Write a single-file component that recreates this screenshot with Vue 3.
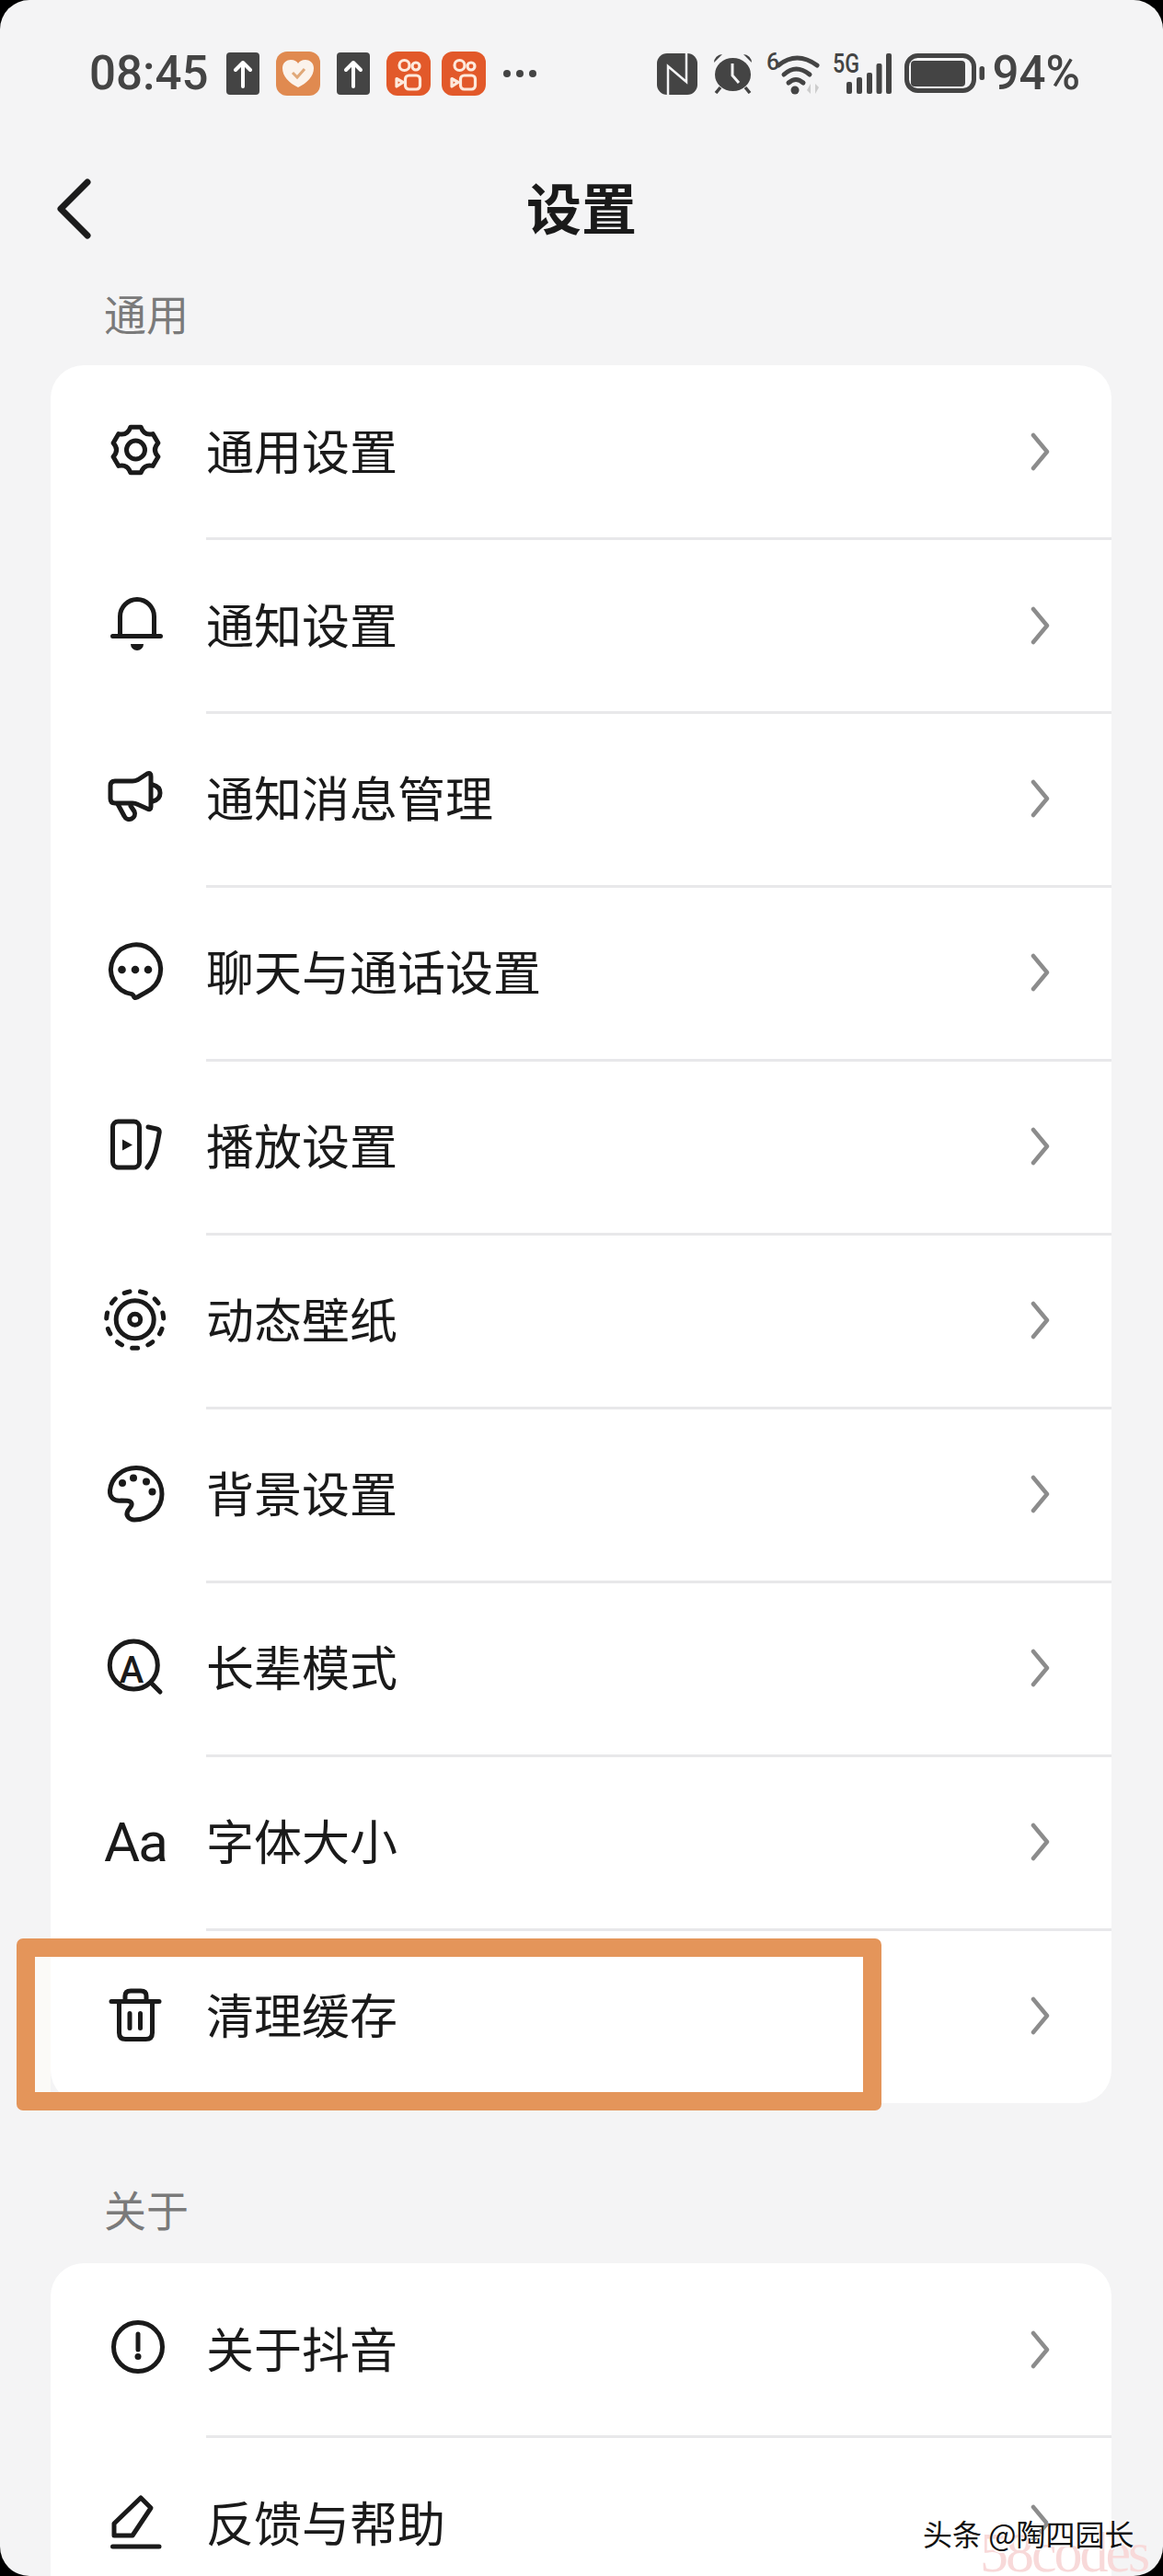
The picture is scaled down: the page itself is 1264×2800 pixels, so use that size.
<script setup>
// gear outline: six flat teeth joined by soft valleys
const gearPath = () => {
  const cx = 47.5
  const cy = 48
  const pt = (r, deg) => {
    const a = (deg * Math.PI) / 180
    return (cx + r * Math.cos(a)).toFixed(1) + " " + (cy + r * Math.sin(a)).toFixed(1)
  }
  let d = ""
  for (let k = 0; k < 6; k++) {
    const a = k * 60 - 90
    d += (k === 0 ? "M" : "L") + pt(25.5, a - 13) + " L" + pt(25.5, a + 13) + " Q" + pt(17.5, a + 30) + " " + pt(25.5, a + 47)
  }
  return d + "Z"
}

const icons = {
  gear: `<path d="${gearPath()}"/><circle cx="47.5" cy="48" r="10"/>`,
  bell: `<path d="M30.5 61V40a18.5 18.5 0 0 1 37 0V61M22.5 61.5H74.5"/><path class="solid" d="M42 70h14a7 7 0 0 1-14 0z"/>`,
  horn: `<path d="M25 30H44Q47 30 50 28.5L60 22Q64 20 64 25V58Q64 62 60 60L50 55.5Q47 54 44 54H25Q20 54 20 49V35Q20 30 25 30Z"/><path d="M66 34Q74 36 74 43Q74 50 66 52M28 55L35 68A6 6 0 0 0 46 63L42 57"/>`,
  chat: `<path d="M43.5 72.6A27 27 0 1 1 58.5 70.6L49 76Q45.5 77.5 45.3 74.5Z"/><circle class="solid" cx="32.5" cy="46" r="4.3"/><circle class="solid" cx="47" cy="46" r="4.3"/><circle class="solid" cx="61" cy="46" r="4.3"/>`,
  play: `<rect x="22.5" y="22" width="29" height="50" rx="6"/><path class="solid" d="M33 41.5L44 47.5L33 53.5Z"/><path d="M61 28L70 30Q74 31 73 35C71 45 69 62 60 72"/>`,
  wallpaper: `<circle cx="46.7" cy="48.3" r="31" pathLength="110" stroke-dasharray="3.4 6.6" stroke-linecap="round" transform="rotate(84.5 46.7 48.3)"/><circle cx="46.7" cy="48.3" r="20.5"/><circle cx="46.7" cy="48.3" r="6"/>`,
  palette: `<path d="M48 20.5C65 20.5 76 34 76 49C76 66 62 77 46 77C40 77 36 72 39 67C41 64 44 62 43 59C42 56 38 56 32 56C23 57 19 52 19.5 45C21 31 33 20.5 48 20.5Z"/><circle class="solid" cx="33" cy="37" r="4"/><circle class="solid" cx="45" cy="31.5" r="4"/><circle class="solid" cx="59" cy="35.5" r="4"/><circle class="solid" cx="65.5" cy="46.5" r="4"/>`,
  elder: `<circle cx="45.3" cy="46" r="26"/><path d="M65 66L74 75"/><text class="solid" x="43" y="65" text-anchor="middle" font-size="40" font-weight="500" font-family="Roboto, sans-serif">A</text>`,
  trash: `<path transform="translate(0 1.6)" d="M21 33H73M36 33V27Q36 21.5 42 21.5H53Q59 21.5 59 27V33M29.5 33V67Q29.5 74 36.5 74H58.5Q65.5 74 65.5 67V33M41 46V62M52.5 46V62"/>`,
  info: `<circle cx="50" cy="47" r="26.5"/><path d="M50 33V50"/><circle class="solid" cx="50" cy="57.5" r="3.5"/>`,
  pen: `<path d="M53 22L64 33L44 63H24V50ZM22.5 75H73" />`
}

const general = [
  { icon: "gear", label: "通用设置" },
  { icon: "bell", label: "通知设置" },
  { icon: "horn", label: "通知消息管理" },
  { icon: "chat", label: "聊天与通话设置" },
  { icon: "play", label: "播放设置" },
  { icon: "wallpaper", label: "动态壁纸" },
  { icon: "palette", label: "背景设置" },
  { icon: "elder", label: "长辈模式" },
  { icon: "aa", label: "字体大小" },
  { icon: "trash", label: "清理缓存" }
]

const about = [
  { icon: "info", label: "关于抖音" },
  { icon: "pen", label: "反馈与帮助" }
]

const sections = [
  { title: "通用", rows: general },
  { title: "关于", rows: about }
]
</script>

<template>
  <div class="phone">
    <div class="screen">
      <div class="statusbar">
        <div class="status-left">
          <span class="time">08:45</span>
          <svg width="36" height="46" viewBox="0 0 36 46">
            <rect width="36" height="46" rx="4" fill="#444" />
            <path d="M18 37V11M10 19L18 11L26 19" fill="none" stroke="#fff" stroke-width="4" stroke-linecap="round" stroke-linejoin="round" />
          </svg>
          <svg class="s-app" width="48" height="48" viewBox="0 0 48 48">
            <rect width="48" height="48" rx="12" fill="#e08a50" />
            <path d="M24 39C14 34 7 27 7 18C7 12 12 9 16 9C20 9 23 11 24 13C25 11 28 9 32 9C36 9 41 12 41 18C41 27 34 34 24 39Z" fill="#fbf3ec" />
            <path d="M18 23L23 28L31 19" fill="none" stroke="#e0a878" stroke-width="3" />
          </svg>
          <svg class="s-app" width="36" height="46" viewBox="0 0 36 46">
            <rect width="36" height="46" rx="4" fill="#444" />
            <path d="M18 37V11M10 19L18 11L26 19" fill="none" stroke="#fff" stroke-width="4" stroke-linecap="round" stroke-linejoin="round" />
          </svg>
          <svg v-for="n in 2" :key="n" :class="n === 1 ? 's-app' : 's-next'" width="48" height="48" viewBox="0 0 48 48">
            <rect width="48" height="48" rx="12" fill="#e2592a" />
            <g fill="none" stroke="#fde9dc" stroke-width="3.2" stroke-linejoin="round">
              <circle cx="19.5" cy="15" r="5.5" />
              <circle cx="32" cy="16" r="4" />
              <rect x="20.5" y="26" width="16" height="15" rx="4" />
              <path d="M11 29.5L18 33.5L11 38Z" />
            </g>
          </svg>
          <span class="more"><i></i><i></i><i></i></span>
        </div>
        <div class="status-right">
          <svg width="44" height="45" viewBox="0 0 44 45">
            <rect width="44" height="45" rx="11" fill="#444" />
            <path d="M12 45V14L32 31V0" fill="none" stroke="#f4f4f5" stroke-width="2.5" />
          </svg>
          <svg class="s-alarm" width="43" height="44" viewBox="0 0 43 44">
            <ellipse cx="21.5" cy="23" rx="19.5" ry="18" fill="#444" />
            <path d="M21 11V24L28 32" fill="none" stroke="#f4f4f5" stroke-width="3" />
            <path d="M1 10A9 9 0 0 1 10 1ZM42 10A9 9 0 0 0 33 1Z" fill="#444" />
            <path d="M8 37L3 43M35 37L40 43" stroke="#444" stroke-width="3.5" />
          </svg>
          <svg class="s-wifi" width="60" height="44" viewBox="0 0 60 44" overflow="visible">
            <text x="0" y="18" font-size="25" font-weight="500" fill="#444" font-family="Roboto, sans-serif">6</text>
            <path d="M13 13Q33 -3 55 13M19 23Q32 11 47 23M24 32Q32 25 40 32" fill="none" stroke="#444" stroke-width="5" stroke-linecap="round" />
            <circle cx="31" cy="40" r="4.5" fill="#444" />
            <path d="M48 33V44L44 40ZM53 44V33L57 37Z" fill="#ccc" />
          </svg>
          <svg class="s-signal" width="65" height="44" viewBox="0 0 65 44" overflow="visible">
            <text x="0" y="21" font-size="29" font-weight="500" fill="#444" font-family="Roboto, sans-serif" textLength="29" lengthAdjust="spacingAndGlyphs">5G</text>
            <rect x="15" y="31" width="6" height="13" rx="2" fill="#444" />
            <rect x="26" y="26" width="6" height="18" rx="2" fill="#444" />
            <rect x="37" y="21" width="6" height="23" rx="2" fill="#444" />
            <rect x="47.5" y="11" width="6" height="33" rx="2" fill="#444" />
            <rect x="58" y="0" width="6" height="44" rx="2" fill="#444" />
          </svg>
          <svg class="s-battery" width="87" height="44" viewBox="0 0 87 44">
            <rect x="2.5" y="2.5" width="73" height="38" rx="12" fill="none" stroke="#444" stroke-width="5" />
            <rect x="7" y="8" width="59" height="28" rx="4" fill="#444" />
            <rect x="81.5" y="14" width="5.5" height="15" rx="2.5" fill="#444" />
          </svg>
          <span class="percent">94%</span>
        </div>
      </div>

      <div class="nav">
        <svg class="back" width="42" height="70" viewBox="0 0 42 70">
          <path d="M35 6L6 35L35 64" />
        </svg>
        <div class="title">设置</div>
      </div>

      <template v-for="section in sections" :key="section.title">
        <div class="section-label">{{ section.title }}</div>
        <div class="card">
          <div v-for="row in section.rows" :key="row.label" class="row">
            <span v-if="row.icon === 'aa'" class="icon icon-aa">Aa</span>
            <svg v-else class="icon" width="100" height="100" viewBox="0 0 100 100" v-html="icons[row.icon]"></svg>
            <div class="row-body">
              <span class="row-label">{{ row.label }}</span>
              <svg class="chevron" width="26" height="42" viewBox="0 0 26 42">
                <path d="M5 3L20 21L5 39" />
              </svg>
            </div>
          </div>
        </div>
      </template>

      <div class="highlight"></div>
      <div class="mark">58codes</div>
      <div class="credit">头条 @陶四园长</div>
    </div>
  </div>
</template>

<style>
body {
  background: #000;
}
</style>

<style scoped>
.phone {
  width: 1264px;
  height: 2800px;
  background: #000;
  font-family: "Noto Sans CJK SC", "Noto Sans", sans-serif;
}

.screen {
  position: relative;
  height: 2800px;
  box-sizing: border-box;
  padding-top: 56px;
  overflow: hidden;
  background: #f4f4f5;
  border-radius: 32px;
}

.statusbar {
  display: flex;
  justify-content: space-between;
  align-items: center;
  height: 48px;
  padding: 0 90px 0 97px;
  color: #444;
  font-family: Roboto, sans-serif;
  font-weight: 500;
  font-size: 51px;
}

.status-left,
.status-right {
  display: flex;
  align-items: center;
  line-height: 48px;
}

.time {
  width: 149px;
}

.s-app {
  margin-left: 18px;
}

.s-next {
  margin-left: 12px;
}

.more {
  display: flex;
  gap: 6px;
  margin-left: 19px;
}

.more i {
  width: 8px;
  height: 8px;
  border-radius: 50%;
  background: #444;
}

.s-alarm {
  margin-left: 17px;
}

.s-wifi {
  margin-left: 15px;
}

.s-signal {
  margin-left: 12px;
}

.s-battery {
  margin-left: 13px;
}

.percent {
  margin-left: 8px;
}

.nav {
  display: grid;
  grid-template-columns: 1fr auto 1fr;
  align-items: center;
  height: 120px;
  margin-top: 63px;
}

.back {
  margin-left: 60px;
  fill: none;
  stroke: #1c1c1c;
  stroke-width: 7;
  stroke-linecap: round;
  stroke-linejoin: round;
}

.title {
  font-size: 60px;
  font-weight: 700;
  line-height: 114px;
  height: 120px;
  color: #1a1a1a;
}

.section-label {
  height: 60px;
  margin-top: 23px;
  margin-bottom: 27px;
  padding-left: 113px;
  font-size: 46px;
  line-height: 58px;
  color: #7a7a7a;
}

.card + .section-label {
  margin-top: 85px;
  margin-bottom: 29px;
}

.card {
  margin: 0 56px 0 55px;
  border-radius: 36px;
  background: #fff;
}

.row {
  display: flex;
  align-items: center;
  height: 188.9px;
}

.icon {
  flex: none;
  width: 100px;
  height: 100px;
  margin: 0 24px 0 45px;
  fill: none;
  stroke: #1a1a1a;
  stroke-width: 5;
  stroke-linecap: round;
  stroke-linejoin: round;
}

.icon :deep(.solid) {
  fill: #1a1a1a;
  stroke: none;
}

.icon-aa {
  display: flex;
  align-items: center;
  justify-content: center;
  box-sizing: border-box;
  padding-right: 6px;
  font-family: Roboto, sans-serif;
  font-size: 60px;
  letter-spacing: -2px;
  color: #1a1a1a;
}

.row-body {
  flex: 1;
  display: flex;
  align-items: center;
  justify-content: space-between;
  align-self: stretch;
  margin-bottom: -1.5px;
  padding-right: 64px;
  border-bottom: 3px solid #e8e8ea;
}

.row:last-child .row-body {
  margin-bottom: 0;
  border-bottom: none;
}

.row-label {
  padding-bottom: 5px;
  font-size: 52px;
  color: #1a1a1a;
}

.chevron {
  fill: none;
  stroke: #8c8c8c;
  stroke-width: 4.5;
  stroke-linecap: round;
  stroke-linejoin: round;
}

.highlight {
  position: absolute;
  left: 18px;
  top: 2107px;
  box-sizing: border-box;
  width: 940px;
  height: 187px;
  border: 20px solid #e4955a;
  border-radius: 7px;
}

.highlight::before {
  content: "";
  position: absolute;
  left: 0;
  top: 0;
  bottom: 0;
  width: 17px;
  background: #fbfaf7;
}

.mark {
  position: absolute;
  left: 1065px;
  top: 2744px;
  font-family: "Liberation Serif", serif;
  font-size: 62px;
  letter-spacing: -3px;
  line-height: 60px;
  color: #f8d9d9;
}

.credit {
  position: absolute;
  left: 1003px;
  top: 2733px;
  font-size: 32px;
  line-height: 40px;
  color: #111;
  white-space: nowrap;
  text-shadow: 0 2px 0 #fff, 0 -2px 0 #fff;
}
</style>
